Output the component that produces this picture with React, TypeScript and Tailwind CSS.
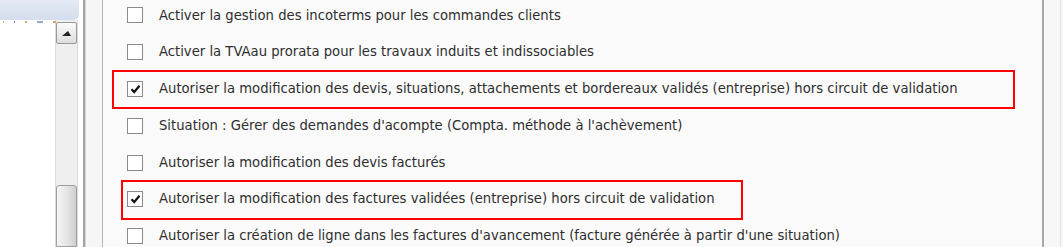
import React from "react";

type Option = {
  label: string;
  checked?: boolean;
  highlight?: { left: number; width: number };
};

const options: Option[] = [
  { label: "Activer la gestion des incoterms pour les commandes clients" },
  { label: "Activer la TVAau prorata pour les travaux induits et indissociables" },
  {
    label:
      "Autoriser la modification des devis, situations, attachements et bordereaux validés (entreprise) hors circuit de validation",
    checked: true,
    highlight: { left: -15, width: 903 },
  },
  { label: "Situation : Gérer des demandes d'acompte (Compta. méthode à l'achèvement)" },
  { label: "Autoriser la modification des devis facturés" },
  {
    label: "Autoriser la modification des factures validées (entreprise) hors circuit de validation",
    checked: true,
    highlight: { left: -6, width: 622 },
  },
  { label: "Autoriser la création de ligne dans les factures d'avancement (facture générée à partir d'une situation)" },
];

function Checkbox({ checked }: { checked?: boolean }) {
  return (
    <div className="w-4 h-4 border border-[#8a8a8a] bg-white flex items-center justify-center shrink-0">
      {checked && (
        <svg width="11" height="10" viewBox="0 0 11 10">
          <path d="M1.5 5.2 L4.2 8 L9.5 1.8" fill="none" stroke="#111" strokeWidth="2.2" />
        </svg>
      )}
    </div>
  );
}

function LeftPanel() {
  return (
    <div className="w-[83px] shrink-0 h-full bg-white flex flex-col">
      <div className="h-[20px] w-[79px] bg-gradient-to-b from-[#e4e9f4] to-[#d5deee] rounded-br-[5px]" />
      <div className="flex flex-1">
        <div className="w-[55px] relative">
          <div className="absolute top-[1px] left-[3px] flex gap-[10px]">
            <span className="w-[1px] h-[2px] bg-[#e0a070]" />
            <span className="w-[1px] h-[2px] bg-[#7090c0]" />
            <span className="w-[2px] h-[2px] bg-[#e0a070]" />
            <span className="w-[6px] h-[2px] bg-[#9aa6c8]" />
            <span className="w-[3px] h-[2px] bg-[#e0a070]" />
          </div>
        </div>
        <div className="w-[23px] flex flex-col bg-[#efefef] border-x border-[#dcdcdc]">
          <div className="h-[22px] mt-[2px] rounded-[2px] border border-[#9a9a9a] bg-gradient-to-b from-[#fafafa] to-[#dedede] flex items-center justify-center">
            <svg width="9" height="5" viewBox="0 0 9 5">
              <path d="M0 5 L6 0 L9 5 Z" fill="#222" />
            </svg>
          </div>
          <div className="flex-1" />
          <div className="h-[62px] rounded-t-[3px] border border-[#9f9f9f] bg-gradient-to-r from-[#f4f4f4] via-[#e6e6e6] to-[#cfcfcf]" />
        </div>
      </div>
    </div>
  );
}

export default function App() {
  return (
    <div
      className="w-[1063px] h-[247px] overflow-hidden flex bg-[#fafafa]"
      style={{ fontFamily: '"DejaVu Sans", sans-serif' }}
    >
      <LeftPanel />
      <div className="w-[2px] bg-[#a3a3a3]" />
      <div className="w-[17px] bg-[#f6f6f6] border-l border-[#d8d8d8]" />
      <div className="w-[1px] bg-[#b5b5b5]" />
      <div className="flex-1 pl-[24px] mt-[-3px]">
        {options.map((o, i) => (
          <div key={i} className="relative h-[36.8px] flex items-center gap-[16px]">
            {o.highlight && (
              <div
                className="absolute top-[-1px] bottom-[-2px] border-2 border-[#ff0000]"
                style={{ left: o.highlight.left, width: o.highlight.width }}
              />
            )}
            <Checkbox checked={o.checked} />
            <span className="text-[13.2px] text-[#2e2e2e] whitespace-nowrap">{o.label}</span>
          </div>
        ))}
      </div>
      <div className="w-[2px] bg-[#a8a8a8]" />
      <div className="w-[16px] bg-[#f7f7f7]" />
      <div className="w-[1px] bg-[#e4e4e4]" />
      <div className="w-[2px] bg-[#f7f7f7]" />
    </div>
  );
}
